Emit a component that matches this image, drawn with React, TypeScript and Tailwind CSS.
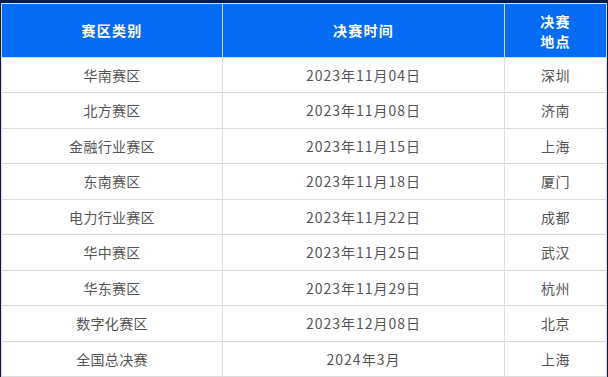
import React from "react";

const rows: [string, string, string][] = [
  ["华南赛区", "2023年11月04日", "深圳"],
  ["北方赛区", "2023年11月08日", "济南"],
  ["金融行业赛区", "2023年11月15日", "上海"],
  ["东南赛区", "2023年11月18日", "厦门"],
  ["电力行业赛区", "2023年11月22日", "成都"],
  ["华中赛区", "2023年11月25日", "武汉"],
  ["华东赛区", "2023年11月29日", "杭州"],
  ["数字化赛区", "2023年12月08日", "北京"],
  ["全国总决赛", "2024年3月", "上海"],
];

const heights = ["h-[35px]", "h-[36px]", "h-[35px]", "h-[36px]", "h-[35px]", "h-[36px]", "h-[35px]", "h-[36px]", "h-[35px]"];

export default function App() {
  return (
    <div
      className="w-[608px] h-[377px] overflow-hidden bg-[#0b1a4c] pt-[3px] pl-[1px]"
      style={{ fontFamily: '"Microsoft YaHei", "Noto Sans CJK SC", "Noto Sans", sans-serif' }}
    >
      <table className="table-fixed border-collapse w-[605px] bg-white">
        <colgroup>
          <col className="w-[221px]" />
          <col className="w-[282px]" />
          <col className="w-[102px]" />
        </colgroup>
        <thead>
          <tr className="h-[54px] bg-[#066cf3]">
            <th className="border border-[#d6d6d6] text-white text-[14px] font-bold tracking-[1.3px] text-center p-0">赛区类别</th>
            <th className="border border-[#d6d6d6] text-white text-[14px] font-bold tracking-[1.3px] text-center p-0">决赛时间</th>
            <th className="border border-[#d6d6d6] text-white text-[14px] font-bold tracking-[1.3px] text-center p-0 leading-[20px]">
              决赛
              <br />
              地点
            </th>
          </tr>
        </thead>
        <tbody>
          {rows.map((r, i) => (
            <tr key={i} className={heights[i]}>
              <td className="border border-[#dcdcdc] text-[#555555] text-[14px] text-center p-0 tracking-[0.3px]">{r[0]}</td>
              <td className="border border-[#dcdcdc] text-[#555555] text-[14px] text-center p-0 tracking-[1px]">{r[1]}</td>
              <td className="border border-[#dcdcdc] text-[#555555] text-[14px] text-center p-0 tracking-[0.5px]">{r[2]}</td>
            </tr>
          ))}
        </tbody>
      </table>
    </div>
  );
}
